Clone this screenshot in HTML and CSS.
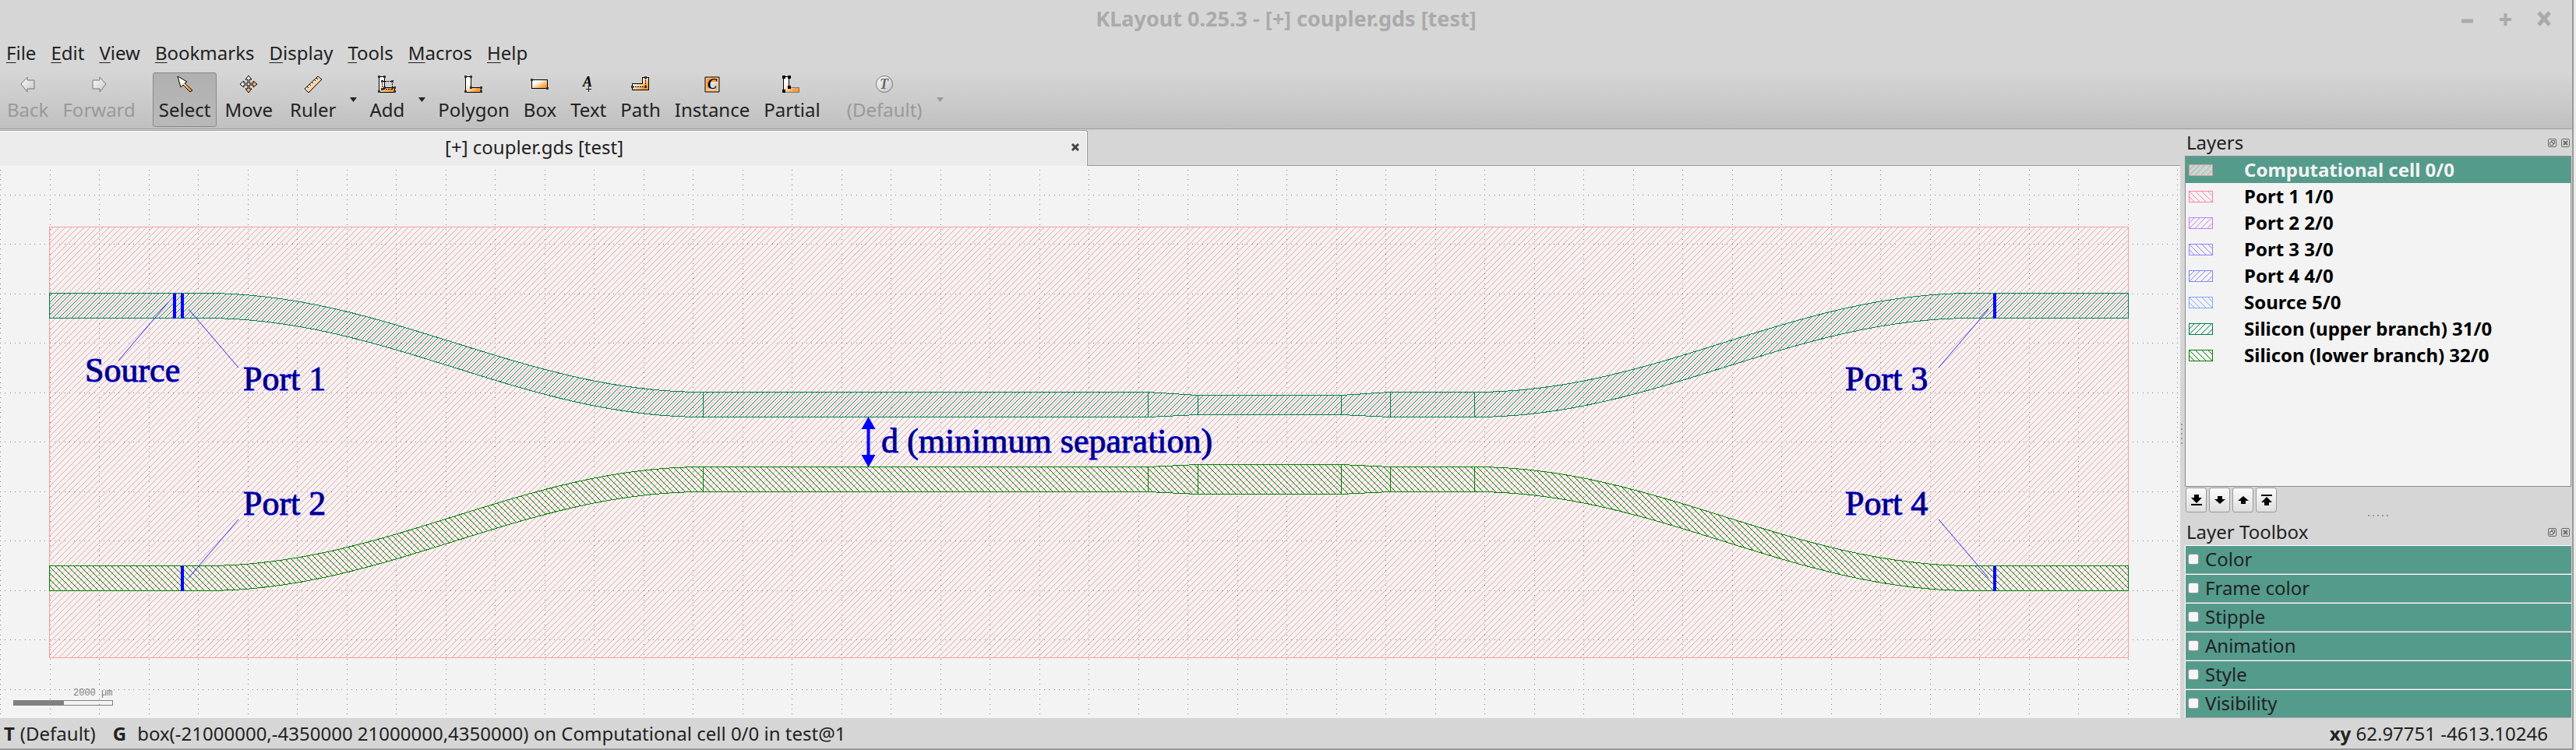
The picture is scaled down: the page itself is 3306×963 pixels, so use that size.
FILE: index.html
```html
<!DOCTYPE html>
<html lang="en">
<head>
<meta charset="utf-8">
<title>KLayout 0.25.3 - [+] coupler.gds [test]</title>
<link rel="stylesheet" href="styles.css">
</head>
<body>
<svg class="defs" aria-hidden="true">
  <defs>
    <linearGradient id="orange" x1="0" y1="0" x2="1" y2="1"><stop offset="0.3" stop-color="#fff"/><stop offset="0.8" stop-color="#ff9c38"/></linearGradient>
    <linearGradient id="silver" x1="0" y1="0" x2="1" y2="1"><stop offset="0.2" stop-color="#f2f2f2"/><stop offset="1" stop-color="#c4c4c4"/></linearGradient>
    <path id="up-hatch" d="M0 7h1v1h-1zM1 6h1v1h-1zM2 5h1v1h-1zM3 4h1v1h-1zM4 3h1v1h-1zM5 2h1v1h-1zM6 1h1v1h-1zM7 0h1v1h-1z"/>
    <path id="down-hatch" d="M0 0h1v1h-1zM1 1h1v1h-1zM2 2h1v1h-1zM3 3h1v1h-1zM4 4h1v1h-1zM5 5h1v1h-1zM6 6h1v1h-1zM7 7h1v1h-1z"/>
    <pattern id="hatch-cell" width="8" height="8" patternUnits="userSpaceOnUse"><use href="#up-hatch" fill="#ff9d9d"/></pattern>
    <pattern id="hatch-upper" width="8" height="8" x="4" patternUnits="userSpaceOnUse"><use href="#up-hatch" fill="#008050"/></pattern>
    <pattern id="hatch-lower" width="8" height="8" patternUnits="userSpaceOnUse"><use href="#down-hatch" fill="#008000"/></pattern>
    <pattern id="grid" width="127" height="127" y="567" patternUnits="userSpaceOnUse">
      <path class="grid-line" d="M0 .5H127M0 64.5H127M.5 0V127M64.5 0V127"/>
    </pattern>
    <g id="swatch-up"><rect x=".5" y=".5" width="30" height="14"/><path d="M1 7l6-6M1 14L14 1M8 14L21 1M16 14L29 1M24 14l6-6"/></g>
    <g id="swatch-down"><rect x=".5" y=".5" width="30" height="14"/><path d="M1 8l6 6M1 1l13 13M9 1l13 13M17 1l13 13M25 1l5 5"/></g>
    <g id="float-icon" fill="none" stroke="#6a6a6a"><rect x=".5" y=".5" width="10" height="10" rx="1.5"/><path d="M4.500 4.500v-2h4v4h-2M2.500 4.500h4v4h-4z"/></g>
    <g id="close-icon" fill="none" stroke="#6a6a6a"><rect x=".5" y=".5" width="10" height="10" rx="1.5"/><path stroke-width="2" d="M3 3l5 5M8 3L3 8"/></g>
  </defs>
</svg>
<div class="window">
  <header class="titlebar">
    <h1 class="title">KLayout 0.25.3 - [+] coupler.gds [test]</h1>
    <div class="window-buttons">
      <button class="plain" aria-label="Minimize"><svg width="18" height="20"><path d="M1 13h15" stroke="#aaa" stroke-width="5"/></svg></button>
      <button class="plain" aria-label="Maximize"><svg width="18" height="20"><path d="M1 11h15M8.500 3v16" stroke="#aaa" stroke-width="4"/></svg></button>
      <button class="plain" aria-label="Close"><svg width="18" height="20"><path d="M2 2l14 16M16 2L2 18" stroke="#aaa" stroke-width="5"/></svg></button>
    </div>
  </header>
  <nav class="menubar">
    <button class="plain"><u>F</u>ile</button>
    <button class="plain"><u>E</u>dit</button>
    <button class="plain"><u>V</u>iew</button>
    <button class="plain"><u>B</u>ookmarks</button>
    <button class="plain"><u>D</u>isplay</button>
    <button class="plain"><u>T</u>ools</button>
    <button class="plain"><u>M</u>acros</button>
    <button class="plain"><u>H</u>elp</button>
  </nav>
  <div class="toolbar">
    <button class="tool" disabled><svg width="22" height="22"><path d="M2 11L10 2v4h9v11h-9v4z" fill="url(#silver)" stroke="#777"/></svg>Back</button>
    <button class="tool" disabled><svg width="22" height="22"><path d="M20 11L12 2v4H3v11h9v4z" fill="url(#silver)" stroke="#777"/></svg>Forward</button>
    <button class="tool selected"><svg width="22" height="22"><path d="M2 1l12 7-3 2 10 9-3 2-9-9-3 3z" fill="url(#orange)" stroke="#000"/></svg>Select</button>
    <button class="tool"><svg width="24" height="22"><path d="M12 0l4 5h-3v5h5V7l5 4-5 4v-3h-5v5h3l-4 5-4-5h3v-5H6v3l-5-4 5-4v3h5V5H8z" fill="url(#orange)" stroke="#000"/></svg>Move</button>
    <button class="tool ruler"><svg width="24" height="22"><path d="M1 17L18 1l5 4L6 22z" fill="url(#orange)" stroke="#000"/><path d="M4 14l2 2M7 11l2 2M10 8l2 2M13 5l2 2M16 3l2 2" stroke="#000"/></svg>Ruler</button>
    <button class="plain drop" aria-label="Ruler options"><svg width="9" height="6"><path d="M0 0h9L4.500 6z" fill="#222"/></svg></button>
    <button class="tool"><svg width="24" height="22" shape-rendering="crispEdges"><path d="M1.500 1.500h7v14h13v6h-20z" fill="url(#orange)" stroke="#000"/><path d="M5.500 7.500h13v10h-13z" fill="none" stroke="#000" stroke-dasharray="2 1"/><path d="M0 0h3v3H0zM7 0h3v3H7zM7 14h3v3H7zM20 14h3v3h-3zM0 19h3v3H0zM20 19h3v3h-3zM4 6h3v3H4zM17 6h3v3h-3zM4 16h3v3H4z" fill="#333"/></svg>Add</button>
    <button class="plain drop" aria-label="Add options"><svg width="9" height="6"><path d="M0 0h9L4.500 6z" fill="#222"/></svg></button>
    <button class="tool"><svg width="24" height="22" shape-rendering="crispEdges"><path d="M1.500 1.500h7v14h13v6h-20z" fill="url(#orange)" stroke="#000"/><path d="M0 0h3v3H0zM7 0h3v3H7zM7 14h3v3H7zM20 14h3v3h-3zM0 19h3v3H0zM20 19h3v3h-3z" fill="#333"/></svg>Polygon</button>
    <button class="tool"><svg width="24" height="22" shape-rendering="crispEdges"><path d="M1.500 5.500h20v11h-20z" fill="url(#orange)" stroke="#000"/><path d="M0 4h3v3H0zM20 15h3v3h-3z" fill="#333"/></svg>Box</button>
    <button class="tool"><svg width="22" height="22"><text class="glyph" x="4" y="14">A</text><path d="M11.500 14v7M8 17.500h7" stroke="#222"/></svg>Text</button>
    <button class="tool"><svg width="24" height="22" shape-rendering="crispEdges"><path d="M1.500 10.500h13v-8h8v16h-21z" fill="url(#orange)" stroke="#000"/><path d="M2 14.500h17M18.500 3v12" fill="none" stroke="#000" stroke-dasharray="2 1"/><path d="M0 13h3v3H0zM17 13h3v3h-3zM17 1h3v3h-3z" fill="#333"/></svg>Path</button>
    <button class="tool"><svg width="22" height="22"><path d="M2 2h18v19H2z" fill="#ffc17c" stroke="#000"/><path d="M5 5h13v13H5z" fill="url(#silver)"/><path d="M4 4h14v4H8v9H4z" fill="#ff9c38"/><text class="glyph" x="5" y="17">C</text></svg>Instance</button>
    <button class="tool"><svg width="24" height="22" shape-rendering="crispEdges"><path d="M1.500 1.500h7v14h13v6h-20z" fill="url(#orange)" stroke="#777"/><path d="M1.500 21V1.500h7v14" fill="none" stroke="#000"/><path d="M0 0h4v4H0zM7 0h4v4H7zM7 13h4v4H7zM0 18h4v4H0z" fill="#000"/></svg>Partial</button>
    <button class="tool mode" disabled><svg width="24" height="22"><circle cx="12" cy="11" r="10.500" fill="url(#silver)" stroke="#777"/><text class="glyph dim" x="6" y="17">T</text></svg>(Default)</button>
    <button class="plain drop" aria-label="Mode options" disabled><svg width="9" height="6"><path d="M0 0h9L4.500 6z" fill="#999"/></svg></button>
  </div>
  <main class="workspace">
    <section class="editor">
      <div class="tabbar">
        <div class="tab"><span class="tab-label">[+] coupler.gds [test]</span><button class="plain tab-close" aria-label="Close tab"><svg width="10" height="10"><path d="M1 1l8 8M9 1L1 9" stroke="#444" stroke-width="3"/></svg></button></div>
      </div>
      <svg class="canvas" viewBox="0 213 2798 709" preserveAspectRatio="xMinYMin meet" role="img" aria-label="Layout of the coupler">
        <rect y="213" width="2798" height="709" fill="url(#grid)"/>
        <g class="crisp">
          <rect x="63.500" y="291.500" width="2668" height="553" fill="url(#hatch-cell)" stroke="#ff9d9d"/>
          <g fill="url(#hatch-upper)" stroke="#008050">
            <path d="M63.500 376.500H264C496 376.500 670 503.500 902 503.500H1473L1537 507.500H1721L1784 503.500H1893C2125 503.500 2299 376.500 2531 376.500H2731.500V408.500H2531C2299 408.500 2125 535.500 1893 535.500H1784L1721 532.500H1537L1473 535.500H902C670 535.500 496 408.500 264 408.500H63.500Z"/>
            <path d="M902.500 504V535M1473.500 504V535M1537.500 507V532M1721.500 507V532M1784.500 504V535M1892.500 504V535"/>
          </g>
          <g fill="url(#hatch-lower)" stroke="#008000">
            <path d="M63.500 726.500H264C496 726.500 670 599.500 902 599.500H1473L1537 596.500H1721L1784 599.500H1893C2125 599.500 2299 726.500 2531 726.500H2731.500V758.500H2531C2299 758.500 2125 631.500 1893 631.500H1784L1721 634.500H1537L1473 631.500H902C670 631.500 496 758.500 264 758.500H63.500Z"/>
            <path d="M902.500 600V631M1473.500 600V631M1537.500 597V634M1721.500 597V634M1784.500 600V631M1892.500 600V631"/>
          </g>
          <path fill="#00f" d="M222 377h4v32h-4zM232 377h4v32h-4zM232 727h4v32h-4zM2558 377h4v32h-4zM2558 727h4v32h-4z"/>
          <g stroke="#808080"><rect x="17.500" y="899.500" width="127" height="6" fill="none"/><path fill="#808080" d="M17.500 899.500h64v6h-64z"/></g>
        </g>
        <path class="leader" d="M217 387L152 463M242 397L306 472M242 742L306 667M2552 397L2488 472M2552 742L2488 667"/>
        <path fill="#00f" d="M1114.500 535l9 16h-7v33h7l-9 16-9-16h7v-33h-7z"/>
        <g class="note">
          <text x="109" y="490">Source</text>
          <text x="312" y="501">Port 1</text>
          <text x="312" y="661">Port 2</text>
          <text x="2368" y="501">Port 3</text>
          <text x="2368" y="661">Port 4</text>
          <text x="1131" y="581">d (minimum separation)</text>
        </g>
        <text class="scale" x="94" y="893">2000 µm</text>
      </svg>
    </section>
    <aside class="docks">
      <div class="splitter"></div>
      <div class="dock-title"><h2>Layers</h2>
        <button class="plain" aria-label="Float Layers"><svg width="11" height="11"><use href="#float-icon"/></svg></button>
        <button class="plain" aria-label="Close Layers"><svg width="11" height="11"><use href="#close-icon"/></svg></button>
      </div>
      <ul class="layers">
        <li class="current"><svg class="swatch" width="31" height="15"><rect width="31" height="15" fill="#c5d8d4"/><use href="#swatch-up" stroke="#cfa09a"/></svg>Computational cell 0/0</li>
        <li><svg class="swatch" width="31" height="15"><use href="#swatch-down" stroke="#ff80a8"/></svg>Port 1 1/0</li>
        <li><svg class="swatch" width="31" height="15"><use href="#swatch-up" stroke="#c080ff"/></svg>Port 2 2/0</li>
        <li><svg class="swatch" width="31" height="15"><use href="#swatch-down" stroke="#9580ff"/></svg>Port 3 3/0</li>
        <li><svg class="swatch" width="31" height="15"><use href="#swatch-up" stroke="#8086ff"/></svg>Port 4 4/0</li>
        <li><svg class="swatch" width="31" height="15"><use href="#swatch-down" stroke="#80a8ff"/></svg>Source 5/0</li>
        <li><svg class="swatch" width="31" height="15"><use href="#swatch-up" stroke="#008050"/></svg>Silicon (upper branch) 31/0</li>
        <li><svg class="swatch" width="31" height="15"><use href="#swatch-down" stroke="#008000"/></svg>Silicon (lower branch) 32/0</li>
      </ul>
      <div class="order">
        <button aria-label="Move to bottom"><svg width="14" height="14"><path d="M4 0h6v4h4l-7 7-7-7h4zM0 12h14v2H0z"/></svg></button>
        <button aria-label="Move down"><svg width="14" height="14"><path d="M4 2h6v4h4l-7 6-7-6h4z"/></svg></button>
        <button aria-label="Move up"><svg width="14" height="14"><path d="M4 12h6V8h4L7 2 0 8h4z"/></svg></button>
        <button aria-label="Move to top"><svg width="14" height="14"><path d="M4 14h6v-4h4L7 3l-7 7h4zM0 0h14v2H0z"/></svg></button>
      </div>
      <div class="handle"></div>
      <div class="dock-title"><h2>Layer Toolbox</h2>
        <button class="plain" aria-label="Float Layer Toolbox"><svg width="11" height="11"><use href="#float-icon"/></svg></button>
        <button class="plain" aria-label="Close Layer Toolbox"><svg width="11" height="11"><use href="#close-icon"/></svg></button>
      </div>
      <div class="toolbox">
        <label><input type="checkbox">Color</label>
        <label><input type="checkbox">Frame color</label>
        <label><input type="checkbox">Stipple</label>
        <label><input type="checkbox">Animation</label>
        <label><input type="checkbox">Style</label>
        <label><input type="checkbox">Visibility</label>
      </div>
    </aside>
  </main>
  <footer class="status">
    <b>T</b><span>(Default)</span><b class="grid-tag">G</b><span class="message">box(-21000000,-4350000 21000000,4350000) on Computational cell 0/0 in test@1</span>
    <span class="coords"><b>xy</b> 62.97751 -4613.10246</span>
  </footer>
</div>
</body>
</html>
```
FILE: styles.css
```css
* { box-sizing: border-box; }
body {
  margin: 0;
  background: #ececec;
  color: #222;
  font: 24px/32px "Noto Sans", sans-serif;
}
.defs { position: absolute; width: 0; height: 0; }
svg { display: block; }
button { font: inherit; color: inherit; }
.plain { border: 0; padding: 0; background: none; }

.window {
  display: flex;
  flex-direction: column;
  min-height: 100vh;
  margin-right: 3px;
  border-right: 2px solid #999;
  border-bottom: 2px solid #999;
  background: #d6d6d6;
}
.titlebar {
  display: grid;
  grid-template-columns: 150px 1fr 150px;
  align-items: center;
  padding: 2px 0 0;
  height: 46px;
}
.title { grid-column: 2; margin: 0; font-size: 27px; text-align: center; color: #aaa; }
.window-buttons { display: flex; justify-content: flex-end; gap: 31px; padding-right: 27px; }

.menubar { display: flex; gap: 19px; padding: 6px 8px; }
.menubar u { text-decoration-thickness: 1px; text-underline-offset: 3px; }

.toolbar {
  display: flex;
  padding: 3px 1px 2px;
  gap: 2px;
  border-bottom: 1px solid #999;
  background: linear-gradient(#d6d6d6, #c0c0c0);
}
.tool {
  display: flex;
  flex-direction: column;
  align-items: center;
  gap: 6px;
  padding: 3px 7px 5px;
  border: 1px solid transparent;
  border-radius: 3px;
  background: none;
}
.tool svg { overflow: visible; }
.tool:disabled { color: #999; }
.tool.selected { margin-left: 12px; border-color: #888; background: linear-gradient(#b0b0b0, #b9b9b9); }
.tool.ruler { margin-left: 4px; }
.tool.mode { margin-left: 16px; }
.drop { width: 21px; padding-left: 8px; margin-right: 2px; }
.glyph { font: italic bold 18px "Liberation Serif", serif; fill: #000; }
.glyph.dim { fill: #666; }

.workspace { display: flex; flex: 1; }
.editor { display: flex; flex: 1; flex-direction: column; min-width: 0; }
.tabbar { display: flex; padding-top: 1px; border-bottom: 1px solid #999; }
.tab {
  display: flex;
  width: 49.9%;
  margin-bottom: -1px;
  padding: 5px 6px 8px 0;
  border: solid #999;
  border-width: 1px 1px 0 0;
  border-radius: 0 3px 0 0;
  background: #ebebeb;
  box-shadow: inset -1px 1px #fff;
}
.tab-label { flex: 1; text-align: center; }
.tab-close { display: grid; place-items: center; width: 18px; }
.canvas { flex: 1; width: 100%; min-height: 0; background: #f3f3f3; }
.grid-line { fill: none; stroke: #808080; stroke-dasharray: 1 5.35; shape-rendering: crispEdges; }
.crisp { shape-rendering: crispEdges; }
.leader { fill: none; stroke: #2a2aff; }
.note { font: 44px "Liberation Serif", serif; fill: #000050; stroke: #0000e6; stroke-width: 1; }
.scale { font: 12px "Liberation Mono", monospace; fill: #808080; }

.docks { position: relative; display: flex; flex-direction: column; width: 503px; padding: 0 1px 0 6px; }
.splitter {
  position: absolute;
  left: 1px;
  top: 50%;
  width: 2px;
  height: 26px;
  background: repeating-linear-gradient(#999 0 2px, transparent 2px 6px);
}
.dock-title { display: flex; align-items: center; gap: 6px; padding: 1px 2px 1px; }
.dock-title h2 { flex: 1; margin: 0; font: inherit; }
.layers {
  flex: 1;
  margin: 0;
  padding: 0;
  border: 1px solid #8c8c8c;
  background: #f3f3f3;
  list-style: none;
  font-weight: bold;
  color: #000;
}
.layers li { display: flex; align-items: center; gap: 40px; padding-left: 4px; line-height: 34px; }
.layers .current { background: #549b8c; color: #f3f3f3; }
.swatch { fill: none; shape-rendering: crispEdges; }
.order { display: flex; gap: 3px; padding: 1px 1px 0; }
.order button {
  display: grid;
  place-items: center;
  width: 27px;
  height: 32px;
  padding: 0;
  border: 1px solid #999;
  border-radius: 3px;
  background: linear-gradient(#fbfbfb, #dedede);
}
.handle {
  width: 26px;
  height: 2px;
  margin: 3px auto 3px;
  background: repeating-linear-gradient(90deg, #999 0 2px, transparent 2px 6px);
}
.toolbox label {
  display: flex;
  align-items: center;
  gap: 8px;
  padding: 1px 0 2px 3px;
  border: solid #fff;
  border-width: 1px 0 0 1px;
  border-bottom: 1px solid #aaa;
  background: #549b8c;
}
.toolbox input {
  appearance: none;
  width: 14px;
  height: 14px;
  margin: 0;
  border: 1px solid #999;
  border-radius: 3px;
  background: #f6f6f6;
}
.status { display: flex; align-items: center; gap: 7px; padding: 4px 31px 3px 5px; }
.grid-tag { margin-left: 15px; }
.message { flex: 1; margin-left: 7px; }
```
